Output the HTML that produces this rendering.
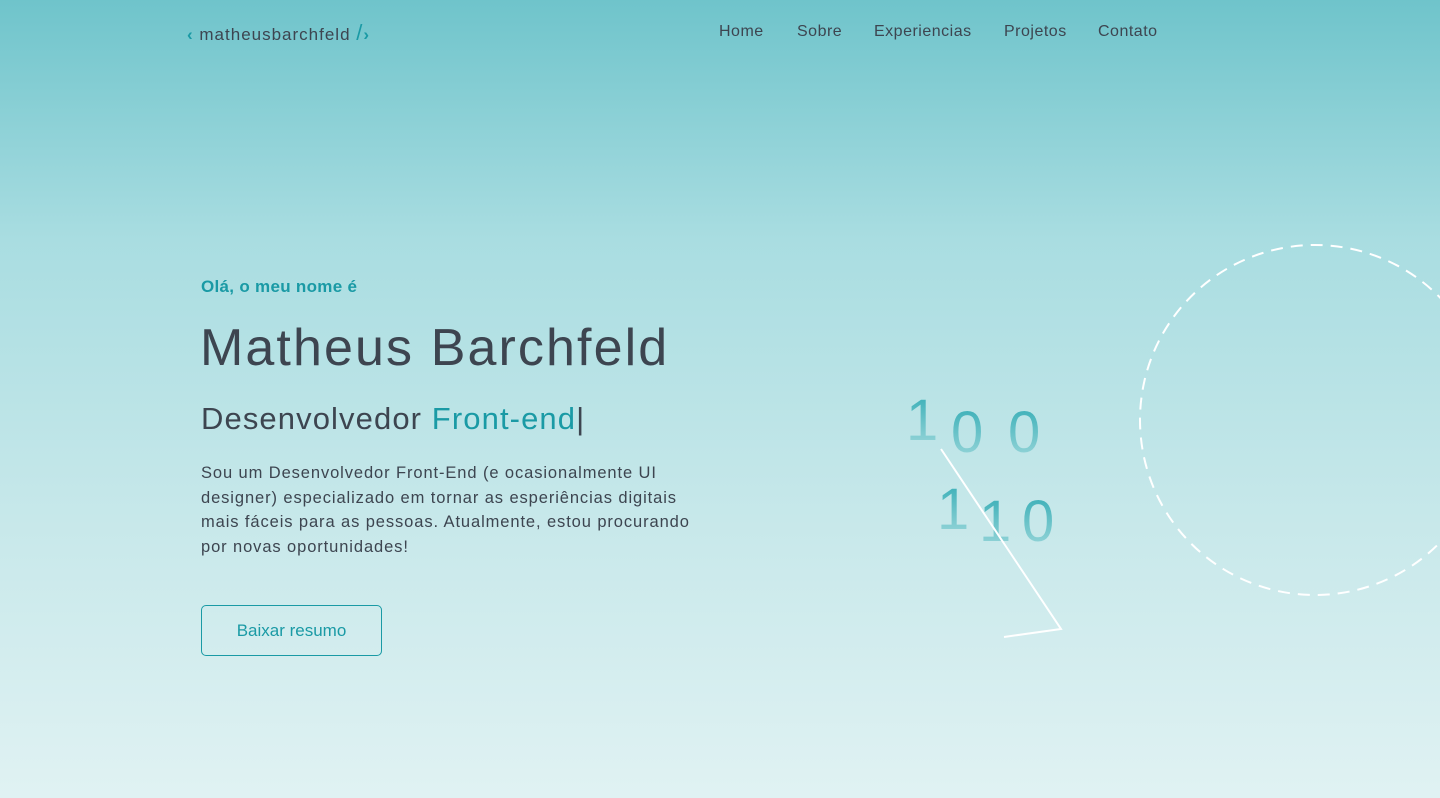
<!DOCTYPE html>
<html><head><meta charset="utf-8"><style>
*{margin:0;padding:0;box-sizing:border-box}
body{width:1440px;height:798px;overflow:hidden;font-family:"Liberation Sans",sans-serif;background:linear-gradient(180deg,#6fc4cb 0%,#a9dde1 30%,#c7e8ea 65%,#e0f2f3 100%);position:relative;color:#3d4550}
.logo{position:absolute;left:187px;top:20px;font-size:17px;color:#3d4550;letter-spacing:1px}
.logo b{color:#1a9aa5;font-weight:bold}
nav{position:absolute;top:23px;left:719px;font-size:16px;color:#3d4550;letter-spacing:0.5px}
nav span{position:absolute;white-space:nowrap}
.hi{position:absolute;left:201px;top:277px;font-size:17px;font-weight:bold;color:#1a9aa5;letter-spacing:0.3px}
h1{position:absolute;left:200px;top:318px;font-size:52px;font-weight:normal;color:#3d4550;letter-spacing:2.1px}
h2{position:absolute;left:201px;top:401px;font-size:31px;font-weight:normal;color:#3d4550;letter-spacing:1.1px}
h2 span{color:#1a9aa5}
p{position:absolute;left:201px;top:461px;width:540px;font-size:16.5px;line-height:24.5px;color:#3d4550;letter-spacing:0.9px;white-space:nowrap}
.btn{position:absolute;left:201px;top:605px;width:181px;height:51px;border:1px solid #1a9aa5;border-radius:5px;color:#1a9aa5;font-size:17px;text-align:center;line-height:49px}
.d{position:absolute;font-size:58px;font-weight:normal;background:linear-gradient(180deg,#2eaab3,#a3dadd);-webkit-background-clip:text;color:transparent}
</style></head><body>
<div class="logo"><b>‹</b> matheusbarchfeld <b style="font-size:22px;font-weight:normal">/</b><b>›</b></div>
<nav><span style="left:0">Home</span><span style="left:78px">Sobre</span><span style="left:155px">Experiencias</span><span style="left:285px">Projetos</span><span style="left:379px">Contato</span></nav>
<div class="hi">Olá, o meu nome é</div>
<h1>Matheus Barchfeld</h1>
<h2>Desenvolvedor <span>Front-end</span>|</h2>
<p>Sou um Desenvolvedor Front-End (e ocasionalmente UI<br>designer) especializado em tornar as esperiências digitais<br>mais fáceis para as pessoas. Atualmente, estou procurando<br>por novas oportunidades!</p>
<div class="btn">Baixar resumo</div>
<div class="d" style="left:906px;top:387px">1</div>
<div class="d" style="left:951px;top:399px">0</div>
<div class="d" style="left:1008px;top:399px">0</div>
<div class="d" style="left:937px;top:476px">1</div>
<div class="d" style="left:979px;top:488px">1</div>
<div class="d" style="left:1022px;top:488px">0</div>
<svg width="1440" height="798" style="position:absolute;left:0;top:0">
<polyline points="941,449 1061,629 1004,637" fill="none" stroke="#fff" stroke-width="2"/>
<circle cx="1315" cy="420" r="175" fill="none" stroke="#fff" stroke-width="2" stroke-dasharray="12 8"/>
</svg>
</body></html>
